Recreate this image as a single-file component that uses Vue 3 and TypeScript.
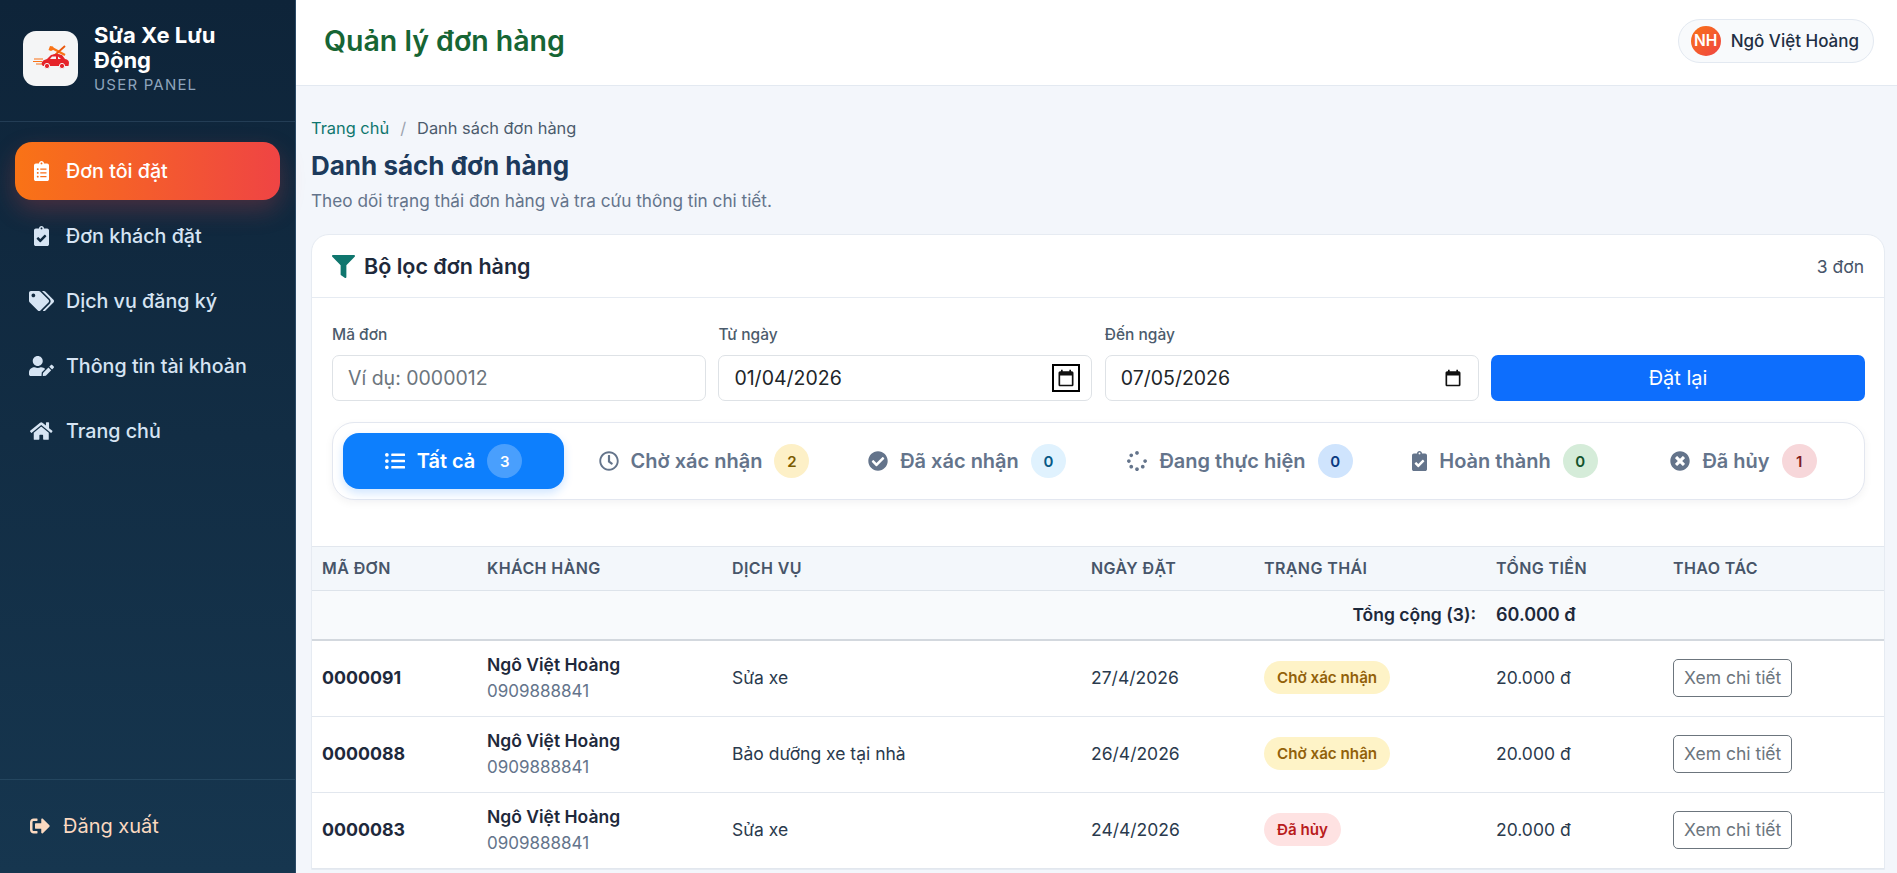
<script setup lang="ts">
interface Tab {
  label: string
  count: number
  icon: string
  box: string
  tone: string
}

interface Order {
  id: string
  name: string
  phone: string
  service: string
  date: string
  status: string
  statusClass: string
  total: string
}

const icons = {
  clipboardList: 'M336 64h-80c0-35.3-28.7-64-64-64s-64 28.7-64 64H48C21.5 64 0 85.5 0 112v352c0 26.5 21.5 48 48 48h288c26.5 0 48-21.5 48-48V112c0-26.5-21.5-48-48-48zM96 424c-13.3 0-24-10.7-24-24s10.7-24 24-24 24 10.7 24 24-10.7 24-24 24zm0-96c-13.3 0-24-10.7-24-24s10.7-24 24-24 24 10.7 24 24-10.7 24-24 24zm0-96c-13.3 0-24-10.7-24-24s10.7-24 24-24 24 10.7 24 24-10.7 24-24 24zm96-192c13.3 0 24 10.7 24 24s-10.7 24-24 24-24-10.7-24-24 10.7-24 24-24zm128 368c0 4.4-3.6 8-8 8H168c-4.4 0-8-3.6-8-8v-16c0-4.4 3.6-8 8-8h144c4.4 0 8 3.6 8 8v16zm0-96c0 4.4-3.6 8-8 8H168c-4.4 0-8-3.6-8-8v-16c0-4.4 3.6-8 8-8h144c4.4 0 8 3.6 8 8v16zm0-96c0 4.4-3.6 8-8 8H168c-4.4 0-8-3.6-8-8v-16c0-4.4 3.6-8 8-8h144c4.4 0 8 3.6 8 8v16z',
  clipboardCheck: 'M336 64h-80c0-35.3-28.7-64-64-64s-64 28.7-64 64H48C21.5 64 0 85.5 0 112v352c0 26.5 21.5 48 48 48h288c26.5 0 48-21.5 48-48V112c0-26.5-21.5-48-48-48zM192 40c13.3 0 24 10.7 24 24s-10.7 24-24 24-24-10.7-24-24 10.7-24 24-24zm121.2 231.8l-143 141.8c-4.7 4.7-12.3 4.6-17-.1l-82.6-83.3c-4.7-4.7-4.6-12.3.1-17L99.1 285c4.7-4.7 12.3-4.6 17 .1l46 46.4 106-105.2c4.7-4.7 12.3-4.6 17 .1l28.2 28.4c4.7 4.8 4.6 12.3-.1 17z',
  tags: 'M497.941 225.941L286.059 14.059A48 48 0 0 0 252.118 0H48C21.49 0 0 21.49 0 48v204.118a48 48 0 0 0 14.059 33.941l211.882 211.882c18.744 18.745 49.136 18.746 67.882 0l204.118-204.118c18.745-18.745 18.745-49.137 0-67.882zM112 160c-26.51 0-48-21.49-48-48s21.49-48 48-48 48 21.49 48 48-21.49 48-48 48zm513.941 133.823L421.823 497.941c-18.745 18.745-49.137 18.745-67.882 0l-.36-.36L527.64 323.522c16.999-16.999 26.36-39.6 26.36-63.64s-9.362-46.641-26.36-63.64L331.397 0h48.721a48 48 0 0 1 33.941 14.059l211.882 211.882c18.745 18.745 18.745 49.137 0 67.882z',
  userEdit: 'M224 256c70.7 0 128-57.3 128-128S294.7 0 224 0 96 57.3 96 128s57.3 128 128 128zm89.6 32h-16.7c-22.2 10.2-46.9 16-72.9 16s-50.6-5.8-72.9-16h-16.7C60.2 288 0 348.2 0 422.4V464c0 26.5 21.5 48 48 48h274.9c-2.4-6.8-3.4-14-2.6-21.3l6.8-60.9 1.2-11.1 7.9-7.9 77.3-77.3c-24.5-27.7-60-45.5-99.9-45.5zm45.3 145.3l-6.8 61c-1.1 10.2 7.5 18.8 17.6 17.6l60.9-6.8 137.9-137.9-71.7-71.7-137.9 137.8zM633 268.9L595.1 231c-9.3-9.3-24.5-9.3-33.8 0l-37.8 37.8-4.1 4.1 71.8 71.7 41.8-41.8c9.3-9.4 9.3-24.5 0-33.9z',
  home: 'M280.37 148.26L96 300.11V464a16 16 0 0 0 16 16l112.06-.29a16 16 0 0 0 15.92-16V368a16 16 0 0 1 16-16h64a16 16 0 0 1 16 16v95.64a16 16 0 0 0 16 16.05L464 480a16 16 0 0 0 16-16V300L295.67 148.26a12.19 12.19 0 0 0-15.3 0zM571.6 251.47L488 182.56V44.05a12 12 0 0 0-12-12h-56a12 12 0 0 0-12 12v72.61L318.47 43a48 48 0 0 0-61 0L4.34 251.47a12 12 0 0 0-1.6 16.9l25.5 31A12 12 0 0 0 45.15 301l235.22-193.74a12.19 12.19 0 0 1 15.3 0L530.9 301a12 12 0 0 0 16.9-1.6l25.5-31a12 12 0 0 0-1.7-16.93z',
  signOut: 'M497 273L329 441c-15 15-41 4.5-41-17v-96H152c-13.3 0-24-10.7-24-24v-96c0-13.3 10.7-24 24-24h136V88c0-21.4 25.9-32 41-17l168 168c9.3 9.4 9.3 24.6 0 34zM192 436v-40c0-6.6-5.4-12-12-12H96c-17.7 0-32-14.3-32-32V160c0-17.7 14.3-32 32-32h84c6.6 0 12-5.4 12-12V76c0-6.6-5.4-12-12-12H96c-53 0-96 43-96 96v192c0 53 43 96 96 96h84c6.6 0 12-5.4 12-12z',
  filter: 'M487.976 0H24.028C2.71 0-8.047 25.866 7.058 40.971L192 225.941V432c0 7.831 3.821 15.17 10.237 19.662l80 55.98C298.02 518.69 320 507.493 320 487.98V225.941l184.947-184.97C520.021 25.896 509.338 0 487.976 0z',
  listUl: 'M48 48a48 48 0 1 0 48 48 48 48 0 0 0-48-48zm0 160a48 48 0 1 0 48 48 48 48 0 0 0-48-48zm0 160a48 48 0 1 0 48 48 48 48 0 0 0-48-48zm448 16H176a16 16 0 0 0-16 16v32a16 16 0 0 0 16 16h320a16 16 0 0 0 16-16v-32a16 16 0 0 0-16-16zm0-320H176a16 16 0 0 0-16 16v32a16 16 0 0 0 16 16h320a16 16 0 0 0 16-16V80a16 16 0 0 0-16-16zm0 160H176a16 16 0 0 0-16 16v32a16 16 0 0 0 16 16h320a16 16 0 0 0 16-16v-32a16 16 0 0 0-16-16z',
  clock: 'M256 8C119 8 8 119 8 256s111 248 248 248 248-111 248-248S393 8 256 8zm0 448c-110.5 0-200-89.5-200-200S145.5 56 256 56s200 89.5 200 200-89.5 200-200 200zm61.8-104.4l-84.9-61.7c-3.1-2.3-4.9-5.9-4.9-9.7V116c0-6.6 5.4-12 12-12h32c6.6 0 12 5.4 12 12v141.7l66.8 48.6c5.4 3.9 6.5 11.4 2.6 16.8L334.6 349c-3.9 5.3-11.4 6.5-16.8 2.6z',
  checkCircle: 'M504 256c0 136.967-111.033 248-248 248S8 392.967 8 256 119.033 8 256 8s248 111.033 248 248zM227.314 387.314l184-184c6.248-6.248 6.248-16.379 0-22.627l-22.627-22.627c-6.248-6.249-16.379-6.249-22.628 0L216 308.118l-70.059-70.059c-6.248-6.248-16.379-6.248-22.628 0l-22.627 22.627c-6.248 6.248-6.248 16.379 0 22.627l104 104c6.249 6.249 16.379 6.249 22.628.001z',
  spinner: 'M304 48c0 26.51-21.49 48-48 48s-48-21.49-48-48 21.49-48 48-48 48 21.49 48 48zm-48 368c-26.51 0-48 21.49-48 48s21.49 48 48 48 48-21.49 48-48-21.49-48-48-48zm208-208c-26.51 0-48 21.49-48 48s21.49 48 48 48 48-21.49 48-48-21.49-48-48-48zM96 256c0-26.51-21.49-48-48-48S0 229.49 0 256s21.49 48 48 48 48-21.49 48-48zm12.922 99.078c-26.51 0-48 21.49-48 48s21.49 48 48 48 48-21.49 48-48c0-26.509-21.491-48-48-48zm294.156 0c-26.51 0-48 21.49-48 48s21.49 48 48 48 48-21.49 48-48c0-26.509-21.49-48-48-48zM108.922 60.922c-26.51 0-48 21.49-48 48s21.49 48 48 48 48-21.49 48-48-21.491-48-48-48z',
  timesCircle: 'M256 8C119 8 8 119 8 256s111 248 248 248 248-111 248-248S393 8 256 8zm121.6 313.1c4.7 4.7 4.7 12.3 0 17L338 377.6c-4.7 4.7-12.3 4.7-17 0L256 312l-65.1 65.6c-4.7 4.7-12.3 4.7-17 0L134.4 338c-4.7-4.7-4.7-12.3 0-17l65.6-65-65.6-65.1c-4.7-4.7-4.7-12.3 0-17l39.6-39.6c4.7-4.7 12.3-4.7 17 0l65 65.7 65.1-65.6c4.7-4.7 12.3-4.7 17 0l39.6 39.6c4.7 4.7 4.7 12.3 0 17L312 256l65.6 65.1z'
}

const nav = [
  { label: 'Đơn tôi đặt', icon: icons.clipboardList, box: '0 0 384 512', active: true },
  { label: 'Đơn khách đặt', icon: icons.clipboardCheck, box: '0 0 384 512', active: false },
  { label: 'Dịch vụ đăng ký', icon: icons.tags, box: '0 0 640 512', active: false },
  { label: 'Thông tin tài khoản', icon: icons.userEdit, box: '0 0 640 512', active: false },
  { label: 'Trang chủ', icon: icons.home, box: '0 0 576 512', active: false }
]

const tabs: Tab[] = [
  { label: 'Tất cả', count: 3, icon: icons.listUl, box: '0 0 512 512', tone: 'all' },
  { label: 'Chờ xác nhận', count: 2, icon: icons.clock, box: '0 0 512 512', tone: 'wait' },
  { label: 'Đã xác nhận', count: 0, icon: icons.checkCircle, box: '0 0 512 512', tone: 'info' },
  { label: 'Đang thực hiện', count: 0, icon: icons.spinner, box: '0 0 512 512', tone: 'run' },
  { label: 'Hoàn thành', count: 0, icon: icons.clipboardCheck, box: '0 0 384 512', tone: 'done' },
  { label: 'Đã hủy', count: 1, icon: icons.timesCircle, box: '0 0 512 512', tone: 'cancel' }
]

const orders: Order[] = [
  { id: '0000091', name: 'Ngô Việt Hoàng', phone: '0909888841', service: 'Sửa xe', date: '27/4/2026', status: 'Chờ xác nhận', statusClass: 'pending', total: '20.000 đ' },
  { id: '0000088', name: 'Ngô Việt Hoàng', phone: '0909888841', service: 'Bảo dưỡng xe tại nhà', date: '26/4/2026', status: 'Chờ xác nhận', statusClass: 'pending', total: '20.000 đ' },
  { id: '0000083', name: 'Ngô Việt Hoàng', phone: '0909888841', service: 'Sửa xe', date: '24/4/2026', status: 'Đã hủy', statusClass: 'cancelled', total: '20.000 đ' }
]
</script>

<template>
  <div class="layout">
    <aside class="sidebar">
      <div class="brand">
        <div class="logo">
          <svg viewBox="0 0 52 52" width="52" height="52">
            <path d="M9 26h9M8 28.500h9M11 31h7" stroke="#f97316" stroke-width="1.200" fill="none" />
            <path d="M27 15l13 7" stroke="#f97316" stroke-width="2.200" fill="none" />
            <path d="M40 13L30 22" stroke="#ea580c" stroke-width="1.800" fill="none" />
            <path d="M25 13l3 .5 1 3-3 1.500-2.500-1z" fill="#f97316" />
            <path d="M17 32c-1-3 1-5 5-6l4-4c3-1.500 8-1.500 11 0l3 4c3 .5 4 2 4 4l-.5 3H18z" fill="#e5232a" />
            <path d="M27 23.500h4v2.500h-6zM33 23.500l3 2.500h-3z" fill="#f4f5f6" />
            <circle cx="22" cy="33" r="2.600" fill="#e5232a" stroke="#f4f5f6" />
            <circle cx="37" cy="33" r="2.600" fill="#e5232a" stroke="#f4f5f6" />
          </svg>
        </div>
        <div class="brand-text">
          <div class="brand-name">Sửa Xe Lưu Động</div>
          <div class="brand-sub">USER PANEL</div>
        </div>
      </div>

      <nav class="nav">
        <a v-for="item in nav" :key="item.label" class="nav-item" :class="{ active: item.active }">
          <span class="nav-icon">
            <svg :viewBox="item.box" height="20"><path :d="item.icon" fill="currentColor" /></svg>
          </span>
          {{ item.label }}
        </a>
      </nav>

      <div class="logout">
        <svg viewBox="0 0 512 512" width="20" height="20"><path :d="icons.signOut" fill="currentColor" /></svg>
        <span>Đăng xuất</span>
      </div>
    </aside>

    <main class="main">
      <header class="topbar">
        <div class="page-name">Quản lý đơn hàng</div>
        <div class="user-chip">
          <span class="avatar">NH</span>
          <span>Ngô Việt Hoàng</span>
        </div>
      </header>

      <div class="content">
        <div class="crumbs">
          <span class="crumb-link">Trang chủ</span>
          <span class="crumb-sep">/</span>
          <span>Danh sách đơn hàng</span>
        </div>
        <h1>Danh sách đơn hàng</h1>
        <p class="lead">Theo dõi trạng thái đơn hàng và tra cứu thông tin chi tiết.</p>

        <section class="card">
          <div class="card-head">
            <div class="card-title">
              <svg viewBox="0 0 512 512" width="23" height="23"><path :d="icons.filter" fill="#0f766e" /></svg>
              Bộ lọc đơn hàng
            </div>
            <span class="card-count">3 đơn</span>
          </div>

          <div class="card-body">
            <div class="filters">
              <label class="field">
                <span>Mã đơn</span>
                <div class="control">
                  <input type="text" placeholder="Ví dụ: 0000012" />
                </div>
              </label>
              <label class="field">
                <span>Từ ngày</span>
                <div class="control">
                  <input type="text" value="01/04/2026" />
                  <span class="cal focus">
                    <svg viewBox="0 0 24 24" width="20" height="20"><path d="M19 4h-1V2h-2v2H8V2H6v2H5C3.900 4 3 4.900 3 6v14c0 1.100.9 2 2 2h14c1.100 0 2-.9 2-2V6c0-1.100-.9-2-2-2zm0 16H5V9h14z" fill="#111" /></svg>
                  </span>
                </div>
              </label>
              <label class="field">
                <span>Đến ngày</span>
                <div class="control">
                  <input type="text" value="07/05/2026" />
                  <span class="cal">
                    <svg viewBox="0 0 24 24" width="20" height="20"><path d="M19 4h-1V2h-2v2H8V2H6v2H5C3.900 4 3 4.900 3 6v14c0 1.100.9 2 2 2h14c1.100 0 2-.9 2-2V6c0-1.100-.9-2-2-2zm0 16H5V9h14z" fill="#111" /></svg>
                  </span>
                </div>
              </label>
              <button class="reset" type="button">Đặt lại</button>
            </div>

            <div class="tabs">
              <div v-for="tab in tabs" :key="tab.label" class="tab" :class="tab.tone">
                <svg :viewBox="tab.box" height="20"><path :d="tab.icon" fill="currentColor" /></svg>
                <span class="tab-label">{{ tab.label }}</span>
                <span class="tab-count">{{ tab.count }}</span>
              </div>
            </div>
          </div>

          <table class="orders">
            <colgroup>
              <col class="col-id" />
              <col class="col-customer" />
              <col class="col-service" />
              <col class="col-date" />
              <col class="col-status" />
              <col class="col-total" />
              <col />
            </colgroup>
            <thead>
              <tr>
                <th>MÃ ĐƠN</th>
                <th>KHÁCH HÀNG</th>
                <th>DỊCH VỤ</th>
                <th>NGÀY ĐẶT</th>
                <th>TRẠNG THÁI</th>
                <th>TỔNG TIỀN</th>
                <th>THAO TÁC</th>
              </tr>
            </thead>
            <tbody>
              <tr class="sum">
                <td colspan="5" class="sum-label">Tổng cộng (3):</td>
                <td class="sum-value">60.000 đ</td>
                <td></td>
              </tr>
              <tr v-for="order in orders" :key="order.id">
                <td class="order-id">{{ order.id }}</td>
                <td>
                  <div class="customer">{{ order.name }}</div>
                  <div class="phone">{{ order.phone }}</div>
                </td>
                <td>{{ order.service }}</td>
                <td>{{ order.date }}</td>
                <td><span class="status" :class="order.statusClass">{{ order.status }}</span></td>
                <td>{{ order.total }}</td>
                <td><button class="detail" type="button">Xem chi tiết</button></td>
              </tr>
            </tbody>
          </table>
        </section>
      </div>
    </main>
  </div>
</template>

<style scoped>
.layout {
  display: flex;
  height: 873px;
  overflow: hidden;
  font-family: Inter, "Noto Sans", sans-serif;
  color: #1f2f44;
  background: #f3f6fb;
}

.sidebar {
  width: 296px;
  flex-shrink: 0;
  display: flex;
  flex-direction: column;
  background: linear-gradient(180deg, #0e2439, #16364f);
  border-right: 1px solid #2b4a66;
  box-sizing: border-box;
}

.brand {
  display: flex;
  align-items: center;
  gap: 16px;
  height: 122px;
  padding: 0 23px 4px;
  box-sizing: border-box;
  border-bottom: 1px solid #233d55;
}

.logo {
  width: 55px;
  height: 55px;
  border-radius: 13px;
  background: #f4f5f6;
  flex-shrink: 0;
  display: flex;
  align-items: center;
  justify-content: center;
}

.brand-text {
  margin-top: 2px;
}

.brand-name {
  color: #fff;
  font-size: 22px;
  font-weight: 700;
  line-height: 25px;
}

.brand-sub {
  color: #8ea4bc;
  font-size: 15px;
  letter-spacing: 1.2px;
  line-height: 24px;
}

.nav {
  flex: 1;
  display: flex;
  flex-direction: column;
  gap: 7px;
  padding: 20px 15px;
}

.nav-item {
  display: flex;
  align-items: center;
  height: 58px;
  padding: 0 14px;
  gap: 12px;
  color: #d6e4f3;
  font-size: 19.7px;
  font-weight: 500;
  border-radius: 17px;
}

.nav-item.active {
  color: #fff;
  background: linear-gradient(90deg, #f97316, #ef4444);
  box-sizing: border-box;
  box-shadow: 0 10px 24px rgba(239, 68, 68, 0.25);
}

.nav-icon {
  width: 25px;
  display: flex;
  justify-content: center;
}

.logout {
  height: 94px;
  box-sizing: border-box;
  border-top: 1px solid #24465f;
  display: flex;
  align-items: center;
  gap: 13px;
  padding: 0 30px 1px;
  color: #fbd9c0;
  font-size: 20px;
}

.main {
  flex: 1;
  min-width: 0;
}

.topbar {
  height: 86px;
  box-sizing: border-box;
  background: #fff;
  border-bottom: 1px solid #e3e9f1;
  display: flex;
  align-items: center;
  justify-content: space-between;
  padding: 0 23px 4px 28px;
}

.page-name {
  color: #166534;
  font-size: 28.5px;
  font-weight: 600;
}

.user-chip {
  display: flex;
  align-items: center;
  gap: 10px;
  height: 44px;
  padding: 0 14px 0 12px;
  box-sizing: border-box;
  border: 1px solid #e3e9f1;
  border-radius: 22px;
  background: #f8fafc;
  font-size: 17px;
  font-weight: 500;
}

.avatar {
  width: 30px;
  height: 30px;
  border-radius: 50%;
  background: linear-gradient(135deg, #f97316, #ef4444);
  color: #fff;
  font-size: 15.5px;
  font-weight: 600;
  display: flex;
  align-items: center;
  justify-content: center;
}

.content {
  padding: 30px 12px 0 15px;
}

.crumbs {
  display: flex;
  align-items: center;
  gap: 11px;
  font-size: 16.4px;
  line-height: 24px;
  color: #4b5b6c;
}

.crumb-link {
  color: #0f766e;
}

.crumb-sep {
  color: #9ca3af;
}

h1 {
  margin: 9px 0 0;
  font-size: 26px;
  line-height: 34px;
  font-weight: 700;
  color: #1c3a5c;
}

.lead {
  margin: 6px 0 0;
  font-size: 17.2px;
  line-height: 24px;
  color: #64748b;
}

.card {
  margin-top: 21px;
  background: #fff;
  border: 1px solid #e6ebf2;
  border-radius: 18px 18px 0 0;
  overflow: hidden;
}

.card-head {
  height: 62px;
  border-bottom: 1px solid #e6ebf2;
  display: flex;
  align-items: center;
  justify-content: space-between;
  padding: 0 20px;
}

.card-title {
  display: flex;
  align-items: center;
  gap: 9px;
  font-size: 21.5px;
  font-weight: 600;
  color: #1e293b;
}

.card-count {
  font-size: 17.5px;
  color: #475569;
}

.card-body {
  padding: 26px 19px 46px 20px;
}

.filters {
  display: grid;
  grid-template-columns: repeat(4, 1fr);
  gap: 12.5px;
  align-items: end;
}

.field > span {
  display: block;
  font-size: 15.5px;
  font-weight: 500;
  color: #4b5b6c;
  line-height: 22px;
  margin-bottom: 9px;
}

.control {
  height: 46px;
  box-sizing: border-box;
  border: 1px solid #dee2e6;
  border-radius: 7px;
  background: #fff;
  display: flex;
  align-items: center;
  padding: 0 15px;
}

.control input {
  flex: 1;
  min-width: 0;
  border: 0;
  outline: 0;
  padding: 0;
  font: inherit;
  font-size: 19.5px;
  color: #212529;
  background: transparent;
}

.control input::placeholder {
  color: #6c757d;
}

.cal {
  display: flex;
  padding: 2px;
  border: 2px solid transparent;
  margin-right: -4px;
}

.cal.focus {
  border-color: #000;
}

.reset {
  height: 46px;
  border: 0;
  border-radius: 7px;
  background: #0d6efd;
  color: #fff;
  font: inherit;
  font-size: 20px;
}

.tabs {
  margin-top: 21px;
  height: 78px;
  box-sizing: border-box;
  border: 1px solid #e3e7f0;
  border-radius: 22px;
  background: #fff;
  box-shadow: 0 3px 8px rgba(15, 23, 42, 0.05);
  padding: 10px;
  display: grid;
  grid-template-columns: 221px 268px 246px 288px 230px 1fr;
  gap: 6px;
}

.tab {
  display: flex;
  align-items: center;
  justify-content: center;
  gap: 12px;
  border-radius: 16px;
  color: #64748b;
  font-size: 20px;
  font-weight: 600;
}

.tab.cancel {
  padding-left: 7px;
}

.tab-count {
  width: 35px;
  height: 34px;
  border-radius: 50%;
  display: flex;
  align-items: center;
  justify-content: center;
  font-size: 15px;
  font-weight: 600;
}

.tab.all {
  background: #0d7ffd;
  color: #fff;
  box-shadow: 0 4px 10px rgba(13, 127, 253, 0.2);
}

.all .tab-count {
  background: rgba(255, 255, 255, 0.25);
}

.wait .tab-count {
  background: #fdf0c7;
  color: #7a5b00;
}

.info .tab-count {
  background: #e0f2fe;
  color: #075985;
}

.run .tab-count {
  background: #cfe4fd;
  color: #0b3a80;
}

.done .tab-count {
  background: #d5ecd9;
  color: #14532d;
}

.cancel .tab-count {
  background: #f7d7da;
  color: #7f1d1d;
}

.orders {
  width: 100%;
  table-layout: fixed;
  border-collapse: collapse;
  font-size: 17.5px;
}

.col-id {
  width: 165px;
}

.col-customer {
  width: 245px;
}

.col-service {
  width: 359px;
}

.col-date {
  width: 173px;
}

.col-status {
  width: 232px;
}

.col-total {
  width: 177px;
}

.orders th {
  height: 44px;
  box-sizing: border-box;
  padding: 0 10px 1px;
  text-align: left;
  font-size: 16px;
  font-weight: 600;
  letter-spacing: 0.4px;
  color: #475569;
  background: #f3f7fb;
  border-top: 1px solid #e2e7ee;
  border-bottom: 1px solid #dde3ea;
}

.orders td {
  padding: 0 10px 2px;
  height: 73px;
  border-bottom: 1px solid #e2e7ee;
  color: #2a3a4d;
}

.orders .sum td {
  height: 46px;
  background: #f8fafc;
  border-bottom: 2px solid #d3d8de;
  font-weight: 600;
  color: #1e293b;
}

.orders .sum-value {
  font-size: 18px;
}

.sum-label {
  text-align: right;
}

.orders .order-id {
  font-weight: 700;
  font-size: 17.8px;
  color: #1e293b;
}

.customer {
  font-weight: 600;
  color: #1e293b;
  line-height: 26px;
}

.phone {
  color: #64748b;
  font-size: 17px;
  line-height: 26px;
}

.status {
  display: inline-flex;
  align-items: center;
  height: 33px;
  padding: 0 13px;
  border-radius: 17px;
  font-size: 15.2px;
  font-weight: 600;
}

.status.pending {
  background: #fef3c7;
  color: #92610a;
}

.status.cancelled {
  background: #fee2e2;
  color: #b91c1c;
}

.detail {
  height: 38px;
  padding: 0 10px;
  border: 1px solid #6c757d;
  border-radius: 5px;
  background: #fff;
  color: #6c757d;
  font: inherit;
  font-size: 17.5px;
}
</style>

<style>
body {
  margin: 0;
  overflow: hidden;
}
</style>
